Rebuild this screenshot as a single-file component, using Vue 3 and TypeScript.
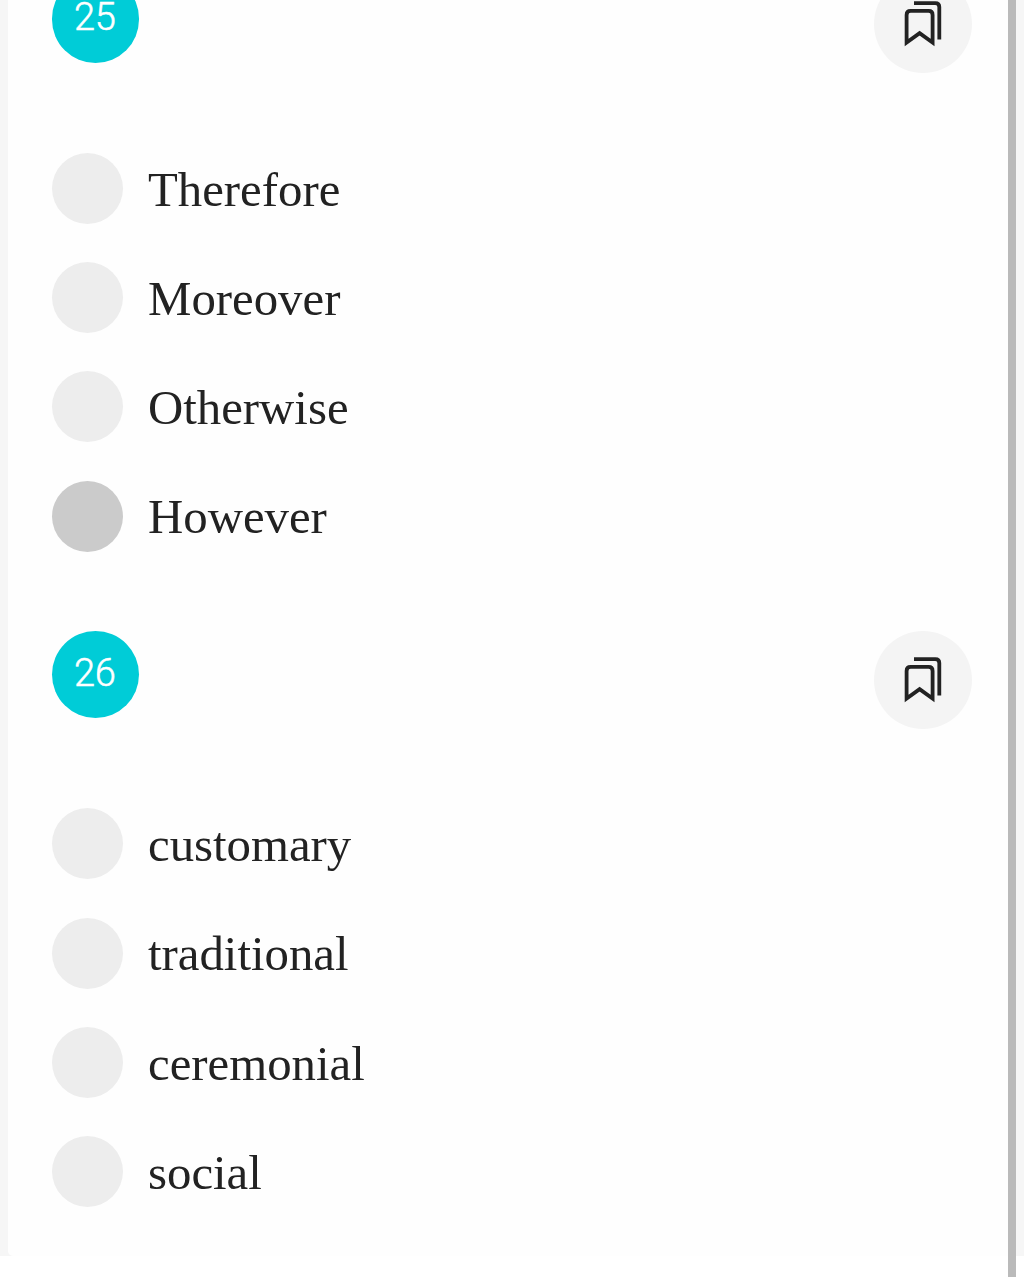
<script setup lang="ts">
interface Question {
  id: number
  options: string[]
  selected: number | null
}

const questions: Question[] = [
  { id: 25, options: ['Therefore', 'Moreover', 'Otherwise', 'However'], selected: 3 },
  { id: 26, options: ['customary', 'traditional', 'ceremonial', 'social'], selected: null },
]
</script>

<template>
  <div class="viewport">
    <div class="page">
      <main class="card">
        <section v-for="q in questions" :key="q.id" class="question">
          <header class="head">
            <span class="badge">{{ q.id }}</span>
            <button class="bookmark" type="button" aria-label="Bookmark">
              <svg width="40" height="48" viewBox="0 0 40 48" fill="none" stroke="#222" stroke-width="3.8">
                <path d="M3.6 42.6V14.9Q3.6 10.9 7.6 10.9H25.6Q29.6 10.9 29.6 14.9V42.6L16.6 33.2Z" />
                <path d="M11 3.1H32.3Q36.3 3.1 36.3 7.1V39.6" />
              </svg>
            </button>
          </header>
          <ul class="options">
            <li v-for="(option, i) in q.options" :key="option" class="option">
              <span class="radio" :class="{ selected: q.selected === i }"></span>
              <span class="label">{{ option }}</span>
            </li>
          </ul>
        </section>
      </main>
      <div class="gutter"></div>
    </div>
    <div class="scrollbar"></div>
  </div>
</template>

<style>
body {
  margin: 0;
  background: #fff;
}
</style>

<style scoped>
.viewport {
  position: relative;
  width: 1024px;
  height: 1277px;
  overflow: hidden;
  background: #fff;
}
.page {
  box-sizing: border-box;
  display: flex;
  height: 1256px;
  padding-left: 8px;
  background: #f6f6f6;
}
.card {
  flex: 1;
  box-sizing: border-box;
  padding: 0 36px 0 44px;
  overflow: hidden;
  background: #fefefe;
  border-radius: 0 0 0 5px;
}
.gutter {
  width: 16px;
}
.question {
  height: 655.5px;
}
.question:first-child {
  margin-top: -24.9px;
}
.head {
  display: flex;
  justify-content: space-between;
  align-items: flex-start;
  height: 177.8px;
}
.badge {
  box-sizing: border-box;
  width: 87.4px;
  height: 87.4px;
  padding-right: 2px;
  border-radius: 50%;
  background: #00ccd7;
  color: #fff;
  font: 300 38px/85px Roboto, sans-serif;
  letter-spacing: -0.3px;
  -webkit-text-stroke: 0.5px #fff;
  text-align: center;
}
.bookmark {
  display: flex;
  align-items: center;
  justify-content: center;
  width: 98px;
  height: 98px;
  padding: 0;
  border: 0;
  border-radius: 50%;
  background: #f4f4f4;
}
.options {
  display: flex;
  flex-direction: column;
  gap: 38.25px;
  margin: 0;
  padding: 0;
  list-style: none;
}
.option {
  display: flex;
  align-items: center;
  gap: 25px;
  height: 71px;
}
.radio {
  width: 71px;
  height: 71px;
  border-radius: 50%;
  background: #ededed;
}
.radio.selected {
  background: #cbcbcb;
}
.label {
  padding-top: 3.6px;
  color: #222;
  font: 48.8px/71px "Liberation Serif", "Times New Roman", serif;
}
.scrollbar {
  position: absolute;
  top: 0;
  right: 8px;
  width: 8.4px;
  height: 100%;
  background: #bababa;
}
</style>
